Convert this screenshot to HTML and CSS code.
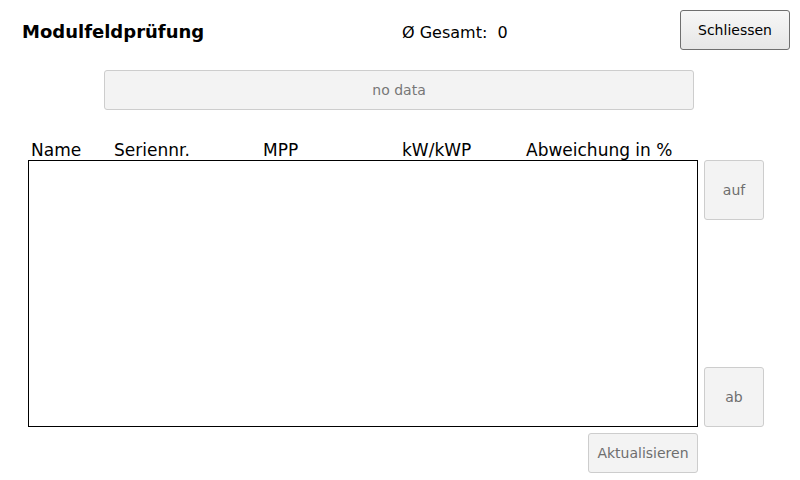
FILE: index.html
```html
<!DOCTYPE html>
<html lang="de">
<head>
<meta charset="utf-8">
<title>Modulfeldprüfung</title>
<link rel="stylesheet" href="styles.css">
</head>
<body>
<div class="page">
  <header class="topbar">
    <h1 class="title">Modulfeldprüfung</h1>
    <div class="total">Ø Gesamt:&nbsp; 0</div>
    <button class="btn btn-close">Schliessen</button>
  </header>
  <div class="status-row">
    <div class="status">no data</div>
  </div>
  <div class="main">
    <div class="table-area">
      <div class="cols">
        <span>Name</span>
        <span>Seriennr.</span>
        <span>MPP</span>
        <span>kW/kWP</span>
        <span>Abweichung in %</span>
      </div>
      <div class="list"></div>
      <div class="actions">
        <button class="btn btn-soft btn-refresh">Aktualisieren</button>
      </div>
    </div>
    <div class="side">
      <button class="btn btn-soft btn-nav">auf</button>
      <button class="btn btn-soft btn-nav">ab</button>
    </div>
  </div>
</div>
</body>
</html>
```
FILE: styles.css
```css
* { box-sizing: border-box; }
html, body { margin: 0; padding: 0; background: #fff; }
body {
  font-family: "DejaVu Sans", Verdana, sans-serif;
  color: #000;
  width: 800px;
  height: 480px;
  overflow: hidden;
}
.page { width: 800px; height: 480px; }

.topbar {
  display: flex;
  align-items: flex-start;
  padding-top: 10px;
  height: 70px;
}
.title {
  margin: 0 0 0 22px;
  width: 378px;
  font-size: 18px;
  font-weight: bold;
  line-height: 20px;
  padding-top: 12px;
}
.total {
  width: 280px;
  font-size: 16px;
  line-height: 20px;
  padding-top: 13px;
  padding-left: 2px;
}

.btn {
  font-family: "DejaVu Sans", Verdana, sans-serif;
  font-size: 14px;
  padding: 0;
  margin: 0;
  border-radius: 3px;
  cursor: default;
}
.btn-close {
  width: 110px;
  height: 40px;
  border: 1px solid #6f6f6f;
  background: linear-gradient(#f7f7f7, #e6e6e6);
  color: #000;
}
.btn-soft {
  border: 1px solid #cdcdcd;
  background: #f3f3f3;
  color: #6e6e6e;
}

.status-row { padding-left: 104px; }
.status {
  width: 590px;
  height: 40px;
  border: 1px solid #cdcdcd;
  border-radius: 3px;
  background: #f3f3f3;
  color: #777;
  font-size: 14px;
  display: flex;
  align-items: center;
  justify-content: center;
}

.main {
  display: flex;
  padding-left: 28px;
  margin-top: 30px;
  gap: 6px;
}
.table-area { width: 670px; }
.cols {
  display: grid;
  grid-template-columns: 83px 149px 139px 124px 1fr;
  padding-left: 3px;
  font-size: 17px;
  line-height: 20px;
  height: 20px;
}
.list {
  height: 267px;
  border: 1px solid #000;
  background: #fff;
}
.actions {
  display: flex;
  justify-content: flex-end;
  padding-top: 6px;
}
.btn-refresh { width: 110px; height: 40px; }

.side {
  display: flex;
  flex-direction: column;
  justify-content: space-between;
  padding-top: 20px;
  height: 287px;
}
.btn-nav { width: 60px; height: 60px; font-size: 14px; }
```
